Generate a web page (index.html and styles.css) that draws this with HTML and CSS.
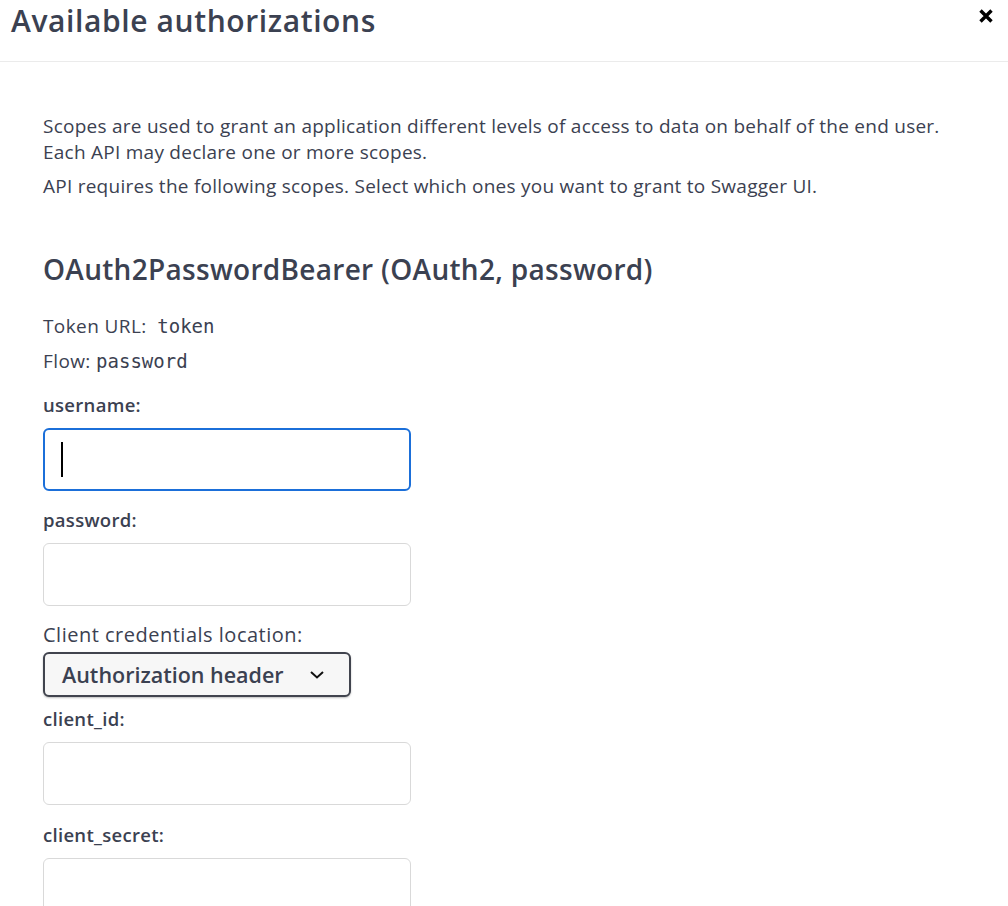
FILE: index.html
```html
<!DOCTYPE html>
<html lang="en">
<head>
<meta charset="utf-8">
<title>Available authorizations</title>
<link rel="stylesheet" href="styles.css">
</head>
<body>
<div class="modal">
  <header class="modal-header">
    <h3 class="modal-title">Available authorizations</h3>
    <button class="close" aria-label="Close">
      <svg width="16" height="16" viewBox="0 0 16 16"><path d="M2.5 2.5 L13.5 13.5 M13.5 2.5 L2.5 13.5" stroke="#000" stroke-width="3.4" stroke-linecap="butt"/></svg>
    </button>
  </header>
  <section class="modal-content">
    <div class="scopes-intro">
      <p>Scopes are used to grant an application different levels of access to data on behalf of the end user.<br>Each API may declare one or more scopes.</p>
      <p>API requires the following scopes. Select which ones you want to grant to Swagger UI.</p>
    </div>
    <h2 class="scheme-title">OAuth2PasswordBearer (OAuth2, password)</h2>
    <p class="meta">Token URL:&nbsp; <code>token</code></p>
    <p class="meta meta-flow">Flow: <code>password</code></p>

    <div class="field field-first">
      <label class="label" for="username">username:</label>
      <div class="input focused" id="username"><span class="caret"></span></div>
    </div>
    <div class="field">
      <label class="label" for="password">password:</label>
      <div class="input" id="password"></div>
    </div>
    <div class="field field-select">
      <label class="label label-normal">Client credentials location:</label>
      <div class="select">
        <span>Authorization header</span>
        <svg width="16" height="10" viewBox="0 0 16 10"><path d="M2 2 L8 7.5 L14 2" fill="none" stroke="#111" stroke-width="2"/></svg>
      </div>
    </div>
    <div class="field field-after-select">
      <label class="label" for="client_id">client_id:</label>
      <div class="input" id="client_id"></div>
    </div>
    <div class="field field-last">
      <label class="label" for="client_secret">client_secret:</label>
      <div class="input" id="client_secret"></div>
    </div>
  </section>
</div>
</body>
</html>
```

FILE: styles.css
```css
html, body {
  margin: 0;
  padding: 0;
  background: #fff;
  height: 906px;
  overflow: hidden;
}

body {
  font-family: "Open Sans", "Liberation Sans", Arial, sans-serif;
  color: #3b4151;
}

.modal-header {
  height: 61px;
  border-bottom: 1px solid #ebebeb;
  display: flex;
  align-items: flex-start;
  justify-content: space-between;
  padding: 0 14px 0 11px;
}

.modal-title {
  margin: 0;
  font-size: 30px;
  line-height: 42px;
  font-weight: 600;
  letter-spacing: 0.6px;
  color: #3b4151;
}

.close {
  border: none;
  background: none;
  padding: 0;
  margin-top: 8px;
  width: 16px;
  height: 16px;
  display: flex;
}

.modal-content {
  padding: 51px 43px 0 43px;
}

.scopes-intro p {
  margin: 0 0 8px 0;
  font-size: 19px;
  line-height: 26px;
  letter-spacing: 0.25px;
}

.scheme-title {
  margin: 52px 0 0 0;
  font-size: 28px;
  line-height: 36px;
  font-weight: 600;
  letter-spacing: 0.3px;
}

.meta {
  margin: 26px 0 0 0;
  font-size: 19px;
  line-height: 26px;
  letter-spacing: 0.4px;
}

.meta-flow {
  margin-top: 9px;
}

.meta code {
  font-family: "DejaVu Sans Mono", "Liberation Mono", monospace;
  font-size: 19px;
  letter-spacing: 0;
  color: #3b4151;
}

.field {
  display: flex;
  flex-direction: column;
  align-items: flex-start;
  margin-top: 16px;
}

.field-first {
  margin-top: 18px;
}

.field-after-select {
  margin-top: 9px;
}

.field-last {
  margin-top: 17px;
}

.label {
  font-size: 18.5px;
  line-height: 26px;
  font-weight: 600;
  letter-spacing: 0.3px;
  margin-bottom: 10px;
}

.label-normal {
  font-size: 20px;
  font-weight: 400;
  letter-spacing: 0.5px;
  margin-bottom: 4px;
}

.input {
  box-sizing: border-box;
  width: 368px;
  height: 63px;
  border: 1px solid #d9d9d9;
  border-radius: 6px;
  background: #fff;
  display: flex;
  align-items: center;
  padding-left: 17px;
}

.input.focused {
  border: 2px solid #1b6fd9;
  padding-left: 16px;
}

.caret {
  width: 2px;
  height: 35px;
  background: #000;
}

.select {
  box-sizing: border-box;
  width: 308px;
  height: 45px;
  border: 2px solid #41444e;
  border-radius: 6px;
  background: #f7f7f7;
  box-shadow: 0 1px 2px rgba(0, 0, 0, 0.25);
  display: flex;
  align-items: center;
  justify-content: space-between;
  padding: 0 24px 0 17px;
  font-size: 21.5px;
  font-weight: 600;
  color: #3b4151;
}

.select svg {
  flex: none;
}
```
